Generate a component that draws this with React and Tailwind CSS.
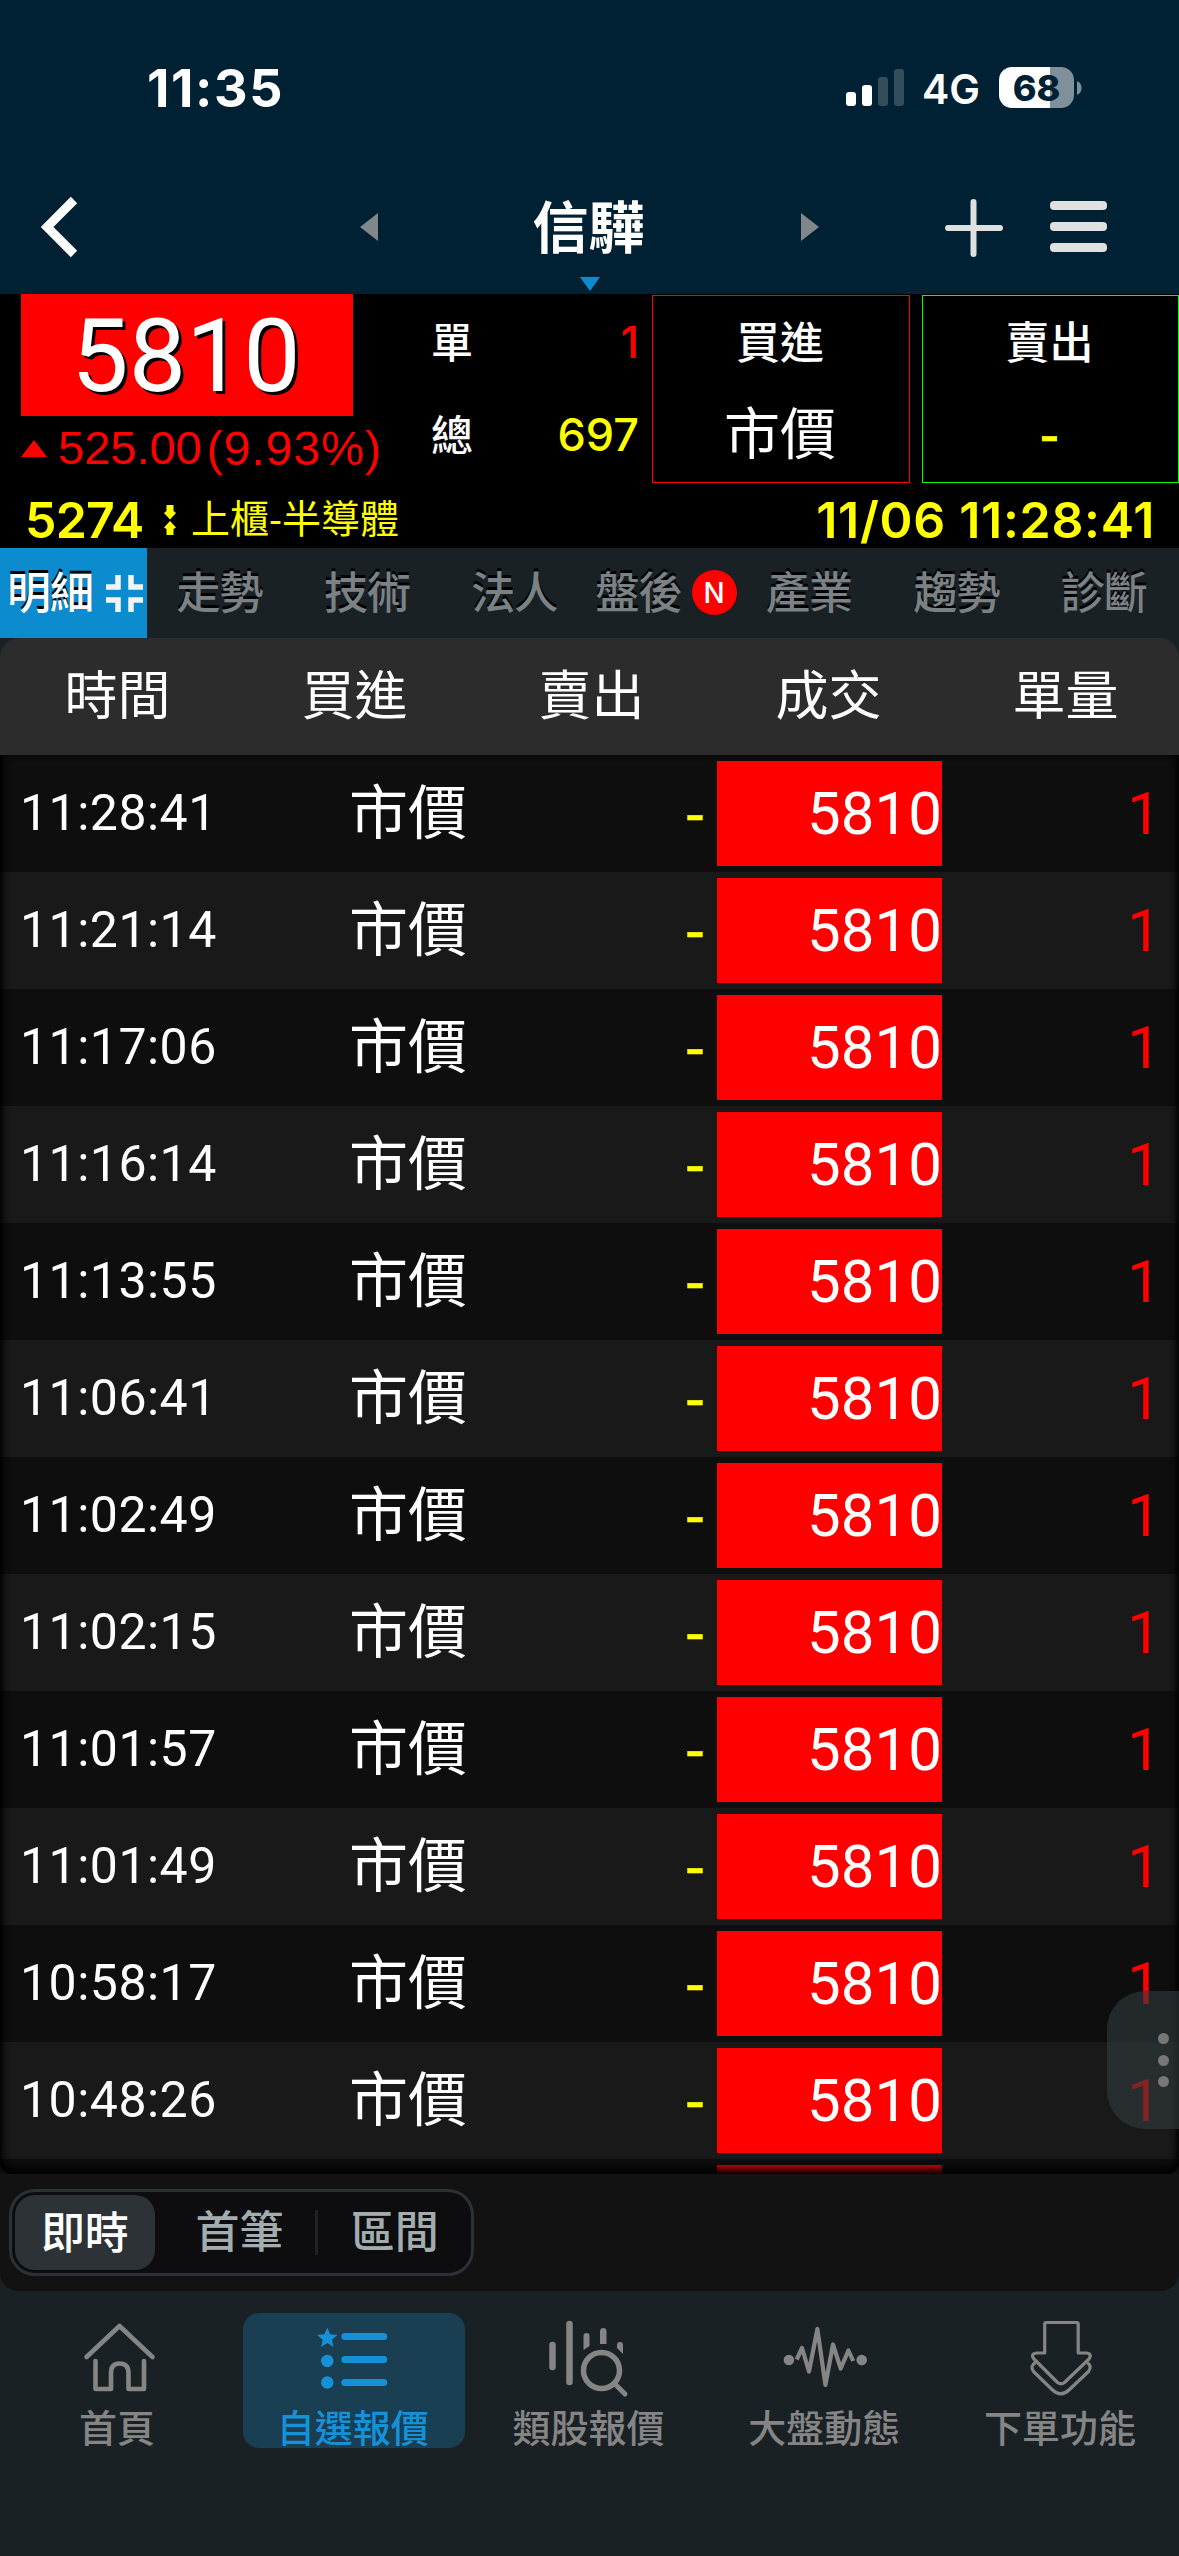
const cjk = 'font-["Liberation_Sans","Noto_Sans_CJK_TC",sans-serif]';
const inter = 'font-["Inter","Noto_Sans_CJK_TC",sans-serif]';
const roboto = 'font-["Roboto","Noto_Sans_CJK_TC",sans-serif]';

const times = [
  '11:28:41', '11:21:14', '11:17:06', '11:16:14', '11:13:55', '11:06:41',
  '11:02:49', '11:02:15', '11:01:57', '11:01:49', '10:58:17', '10:48:26',
];

function StatusBar() {
  return (
    <div className={`flex h-[178px] items-start pt-[57px] pl-[147px] text-white ${inter}`}>
      <div className="h-[62px] w-[699px] text-[52px] leading-[64px] font-bold tracking-[1.6px]">11:35</div>
      <svg width="58" height="38" viewBox="0 0 58 38" className="mt-[12px]" fill="#fff">
        <rect x="0" y="23" width="10" height="14" rx="3" />
        <rect x="16" y="16" width="10" height="21" rx="3" />
        <rect x="32" y="8" width="10" height="29" rx="3" fillOpacity=".2" />
        <rect x="48" y="0" width="10" height="37" rx="3" fillOpacity=".2" />
      </svg>
      <div className="ml-[18px] w-[77px] text-[41px] leading-[64px] font-semibold">4G</div>
      <div className="mt-[10px] flex h-[41px] w-[75px] shrink-0 items-center justify-center rounded-[13px] bg-[linear-gradient(to_right,#fff_51px,#80909a_51px)] text-[36px] leading-none font-extrabold text-[#002133]">68</div>
      <svg width="5" height="14" viewBox="0 0 5 14" className="mt-[24px] ml-[3px]" fill="#80909a">
        <path d="M0 0Q4.500 2 4.500 7Q4.500 12 0 14Z" />
      </svg>
    </div>
  );
}

function TitleBar() {
  return (
    <div className="relative flex h-[116px] items-start pt-[16px] pl-[41px]">
      <svg width="40" height="66" viewBox="0 0 40 66"><path d="M33 6L6 33L33 60" fill="none" stroke="#fff" strokeWidth="9" /></svg>
      <svg width="18" height="28" viewBox="0 0 18 28" className="mt-[19px] ml-[279px]"><path d="M18 0V28L0 14Z" fill="#80868a" /></svg>
      <div className={`mt-[-5px] w-[423px] pr-[2px] text-center text-[56px] leading-[80px] font-bold text-white ${cjk}`}>信驊</div>
      <svg width="18" height="28" viewBox="0 0 18 28" className="mt-[19px]"><path d="M0 0V28L18 14Z" fill="#80868a" /></svg>
      <svg width="58" height="58" viewBox="0 0 58 58" className="mt-[5px] ml-[126px]"><path d="M28.500 3V55M3 29H55" stroke="#e0e0e0" strokeWidth="6" strokeLinecap="round" /></svg>
      <div className="mt-[7px] ml-[47px] flex w-[57px] flex-col gap-[12px]">
        <div className="h-[9px] rounded-[4px] bg-[#e0e0e0]" />
        <div className="h-[9px] rounded-[4px] bg-[#e0e0e0]" />
        <div className="h-[9px] rounded-[4px] bg-[#e0e0e0]" />
      </div>
      <svg width="20" height="14" viewBox="0 0 20 14" className="absolute bottom-[3px] left-[580px]"><path d="M0 0H20L10 14Z" fill="#0d8bcf" /></svg>
    </div>
  );
}

function Quote() {
  return (
    <div className={`h-[254px] bg-black ${cjk}`}>
      <div className="flex h-[194px] pl-[21px]">
        <div className="w-[410px]">
          <div className={`h-[122px] w-[332px] bg-[#f00] pr-[2px] text-center text-[102px] leading-[124px] text-white [text-shadow:3px_3px_0_#000] ${roboto}`}>5810</div>
          <div className="flex h-[64px] items-center text-[#f00]">
            <svg width="26" height="17" viewBox="0 0 26 17"><path d="M13 0L26 17H0Z" fill="#f00" /></svg>
            <span className="ml-[11px] text-[47px] leading-[64px]">525.00</span>
            <span className="ml-[5px] text-[48.500px] leading-[64px] tracking-[0.8px]">(9.93%)</span>
          </div>
        </div>
        <div className="flex w-[208px] flex-col text-[42px] leading-[60px] font-medium">
          <div className="mt-[20px] flex h-[60px] justify-between text-white"><span>單</span><span className={`mt-[-2px] text-[44px] font-medium text-[#f00] ${inter}`}>1</span></div>
          <div className="mt-[33px] flex h-[60px] justify-between text-white"><span>總</span><span className={`mt-[-2px] text-[45px] font-medium text-[#ff0] ${inter}`}>697</span></div>
        </div>
        <div className="mt-px ml-[13px] flex h-[188px] w-[258px] flex-col items-center border border-[#f00] pr-[2px] text-white">
          <div className="mt-[18px] h-[60px] text-[44px] leading-[60px] font-medium">買進</div>
          <div className="mt-[23px] text-[56px] leading-[76px]">市價</div>
        </div>
        <div className="mt-px ml-[12px] flex h-[188px] w-[257px] flex-col items-center border border-[#0f0] pr-[2px] text-white">
          <div className="mt-[18px] h-[60px] text-[44px] leading-[60px] font-medium">賣出</div>
          <div className="mt-[22px] text-[60px] leading-[76px] text-[#ff0] [-webkit-text-stroke:0.5px_#ff0]">-</div>
        </div>
      </div>
      <div className="flex h-[60px] items-center pt-[3px] pr-[24px] pl-[25px] text-[#ff0]">
        <span className={`w-[139px] text-[50px] leading-[60px] font-semibold tracking-[-0.8px] ${inter}`}>5274</span>
        <svg width="12" height="30" viewBox="0 0 12 30" fill="#ff0" className="shrink-0"><path d="M2.500 0H9.500V6L12 8L6 14.500L0 8L2.500 6ZM6 16L12 22.500L9.500 24V30H2.500V24L0 22.500Z" /></svg>
        <span className="ml-[15px] text-[39px] leading-[60px]">上櫃-半導體</span>
        <span className={`ml-auto text-[50px] leading-[60px] font-semibold tracking-[0.7px] ${inter}`}>11/06 11:28:41</span>
      </div>
    </div>
  );
}

function Tabs() {
  const tabs = ['走勢', '技術', '法人', '盤後', '產業', '趨勢', '診斷'];
  return (
    <div className={`grid h-[90px] grid-cols-8 grid-rows-[90px] bg-[#1a2124] text-[44px] leading-[91px] font-medium text-[#7b8285] [text-shadow:0_-3px_0_#000] ${cjk}`}>
      <div className="flex items-center bg-[#0d8bcf] pl-[7px] text-white">
        <span className="tracking-[-1px]">明細</span>
        <svg width="37" height="37" viewBox="0 0 37 37" className="ml-[13px] shrink-0"><path d="M12 0V12H0M25 0V12H37M12 37V25H0M25 37V25H37" fill="none" stroke="#f4f4f4" strokeWidth="5.500" /></svg>
      </div>
      {tabs.map((t) =>
        t === '盤後' ? (
          <div key={t} className="flex items-center pl-[6px]">
            <span className="tracking-[-1px]">{t}</span>
            <span className={`mt-[-1px] ml-[10px] flex size-[45px] items-center justify-center rounded-full bg-[#f00] text-[28px] leading-none text-white [text-shadow:none] ${inter}`}>N</span>
          </div>
        ) : (
          <div key={t} className="pr-[3px] text-center tracking-[-1px]">{t}</div>
        )
      )}
    </div>
  );
}

function Table() {
  return (
    <div className={`bg-[#1a2124] ${cjk}`}>
      <div className="grid h-[117px] grid-cols-[repeat(5,237px)] overflow-hidden rounded-t-[20px] bg-[#2c2c2c] text-center text-[53px] leading-[118px] text-white">
        {['時間', '買進', '賣出', '成交', '單量'].map((h) => <div key={h} className="pr-[2px]">{h}</div>)}
      </div>
      <div className="relative h-[1419px] overflow-hidden bg-[#121212]">
        {times.map((t) => (
          <div key={t} className="flex h-[117px] items-center bg-[#191919] text-[60px] leading-[117px] text-white odd:bg-[#0e0e0e]">
            <span className={`w-[300px] pl-[20px] text-[50px] tracking-[0.5px] ${roboto}`}>{t}</span>
            <span className="mt-[2px] w-[167px] text-right text-[59px]">市價</span>
            <span className="mt-[-2px] w-[238px] text-right text-[#ff0] [-webkit-text-stroke:0.5px_#ff0]">-</span>
            <span className={`ml-[12px] h-[105px] w-[225px] bg-[#f00] text-right leading-[105px] ${roboto}`}>5810</span>
            <span className={`w-[219px] text-right text-[#f00] ${roboto}`}>1</span>
          </div>
        ))}
        <div className="h-[15px] bg-[#0e0e0e] pt-[6px] pl-[717px]"><div className="h-[9px] w-[225px] bg-[#f00]" /></div>
        <div className="absolute inset-0 rounded-b-[12px] shadow-[inset_0_-8px_10px_-2px_#000,inset_5px_0_7px_-3px_#000,inset_-5px_0_7px_-3px_#000]" />
        <div className="absolute right-0 bottom-[45px] flex h-[138px] w-[72px] flex-col items-end justify-center gap-[10.500px] rounded-l-[38px] bg-[#323a3e]/60 pr-[10px]">
          <i className="size-[11px] rounded-full bg-[#777]" />
          <i className="size-[11px] rounded-full bg-[#777]" />
          <i className="size-[11px] rounded-full bg-[#777]" />
        </div>
      </div>
      <div className="flex h-[117px] items-start rounded-b-[18px] bg-[#121212] pt-[15px] pl-[9px]">
        <div className="flex h-[87px] w-[465px] items-center rounded-[26px] border-[3px] border-[#2b3136] bg-[#0d0d0f] pl-[3px] text-center text-[44px] leading-[77px] font-medium text-[#a3adb0]">
          <span className="h-[75px] w-[141px] rounded-[20px] bg-[#2d3237] text-white">即時</span>
          <span className="ml-[9px] w-[153px]">首筆</span>
          <span className="h-[45px] w-[3px] bg-[#212123]" />
          <span className="w-[154px]">區間</span>
        </div>
      </div>
    </div>
  );
}

const icons = {
  home: (
    <g fill="none" stroke="currentColor" strokeWidth="4.600" strokeLinecap="round" strokeLinejoin="round">
      <path d="M18.500 47L51.500 16L84.500 47" />
      <path d="M27.500 51V79H43V63Q43 53.500 51.500 53.500Q60.500 53.500 60.500 63V79H76V51" />
    </g>
  ),
  list: (
    <g fill="currentColor">
      <path d="M23.300 17.500l2.900 6.800 7.300.6-5.600 4.800 1.700 7.200-6.300-3.900-6.300 3.900 1.700-7.200-5.600-4.800 7.300-.6z" />
      <circle cx="23.300" cy="51" r="6.200" /><circle cx="23.300" cy="72.500" r="6.200" />
      <path d="M40.800 26.500H79.800M40.800 49.500H79.800M40.800 72.500H79.800" stroke="currentColor" strokeWidth="7" strokeLinecap="round" />
    </g>
  ),
  sector: (
    <g fill="none" stroke="currentColor" strokeWidth="6.500" strokeLinecap="round">
      <path d="M13.500 35V57M30.500 14V72" />
      <path d="M44.500 40V26Q44.500 23 47.500 23Q50.500 23 50.500 26V36ZM61 34V21.500Q61 18 64.200 18Q67.500 18 67.500 21.500V34ZM78 38V35Q78 32 81 32Q84 32 84 35V44Z" fill="currentColor" stroke="none" />
      <circle cx="62.500" cy="60.500" r="18" strokeWidth="5.500" /><path d="M76 74L86 84" strokeWidth="5" />
    </g>
  ),
  wave: (
    <g fill="none" stroke="currentColor" strokeWidth="4.200" strokeLinejoin="round">
      <path d="M21.700 49.500L27 38L34 61.500L42.400 19L50.400 75L58 34.500L65.700 58.500L73.400 40.500L78.200 51" />
      <circle cx="13.900" cy="50" r="5.300" fill="currentColor" stroke="none" /><circle cx="86.700" cy="50" r="5.300" fill="currentColor" stroke="none" />
    </g>
  ),
  order: (
    <g fill="none" stroke="currentColor" strokeWidth="3.200" strokeLinejoin="round">
      <path d="M33.700 14Q33.700 12.500 35.200 12.500H65.700Q67.200 12.500 67.200 14V43H75Q81.500 43.500 78 49L53.500 72.500Q50 75 46.500 72.500L23 49Q19 44 25.500 43H33.700Z" />
      <path d="M24.500 52.500Q18.500 56 22.500 61.500L41 79.500Q50 88 58.500 79.500L77.500 61.500Q81.500 56 76 52.500" />
    </g>
  ),
};

function BottomNav() {
  const items = [['首頁', 'home'], ['自選報價', 'list'], ['類股報價', 'sector'], ['大盤動態', 'wave'], ['下單功能', 'order']];
  return (
    <div className={`grid h-[265px] grid-cols-5 justify-items-center bg-[#1a2124] pt-[22px] text-[38px] font-medium ${cjk}`}>
      {items.map(([label, icon], i) => (
        <div key={label} className={i === 1 ? 'flex h-[135px] w-[222px] flex-col items-center rounded-[16px] bg-[#1a3e52] text-[#1690d6]' : 'flex h-[135px] w-[222px] flex-col items-center text-[#858585]'}>
          <svg width="100" height="100" viewBox="0 0 100 100" className="mt-[-3px] shrink-0">{icons[icon]}</svg>
          <span className="mt-[-9px] pr-[2px] leading-[56px] whitespace-nowrap">{label}</span>
        </div>
      ))}
    </div>
  );
}

export default function App() {
  return (
    <div className="h-[2556px] w-[1179px] overflow-hidden bg-[#1a2124]">
      <div className="bg-[#002133]">
        <StatusBar />
        <TitleBar />
      </div>
      <Quote />
      <Tabs />
      <Table />
      <BottomNav />
    </div>
  );
}
